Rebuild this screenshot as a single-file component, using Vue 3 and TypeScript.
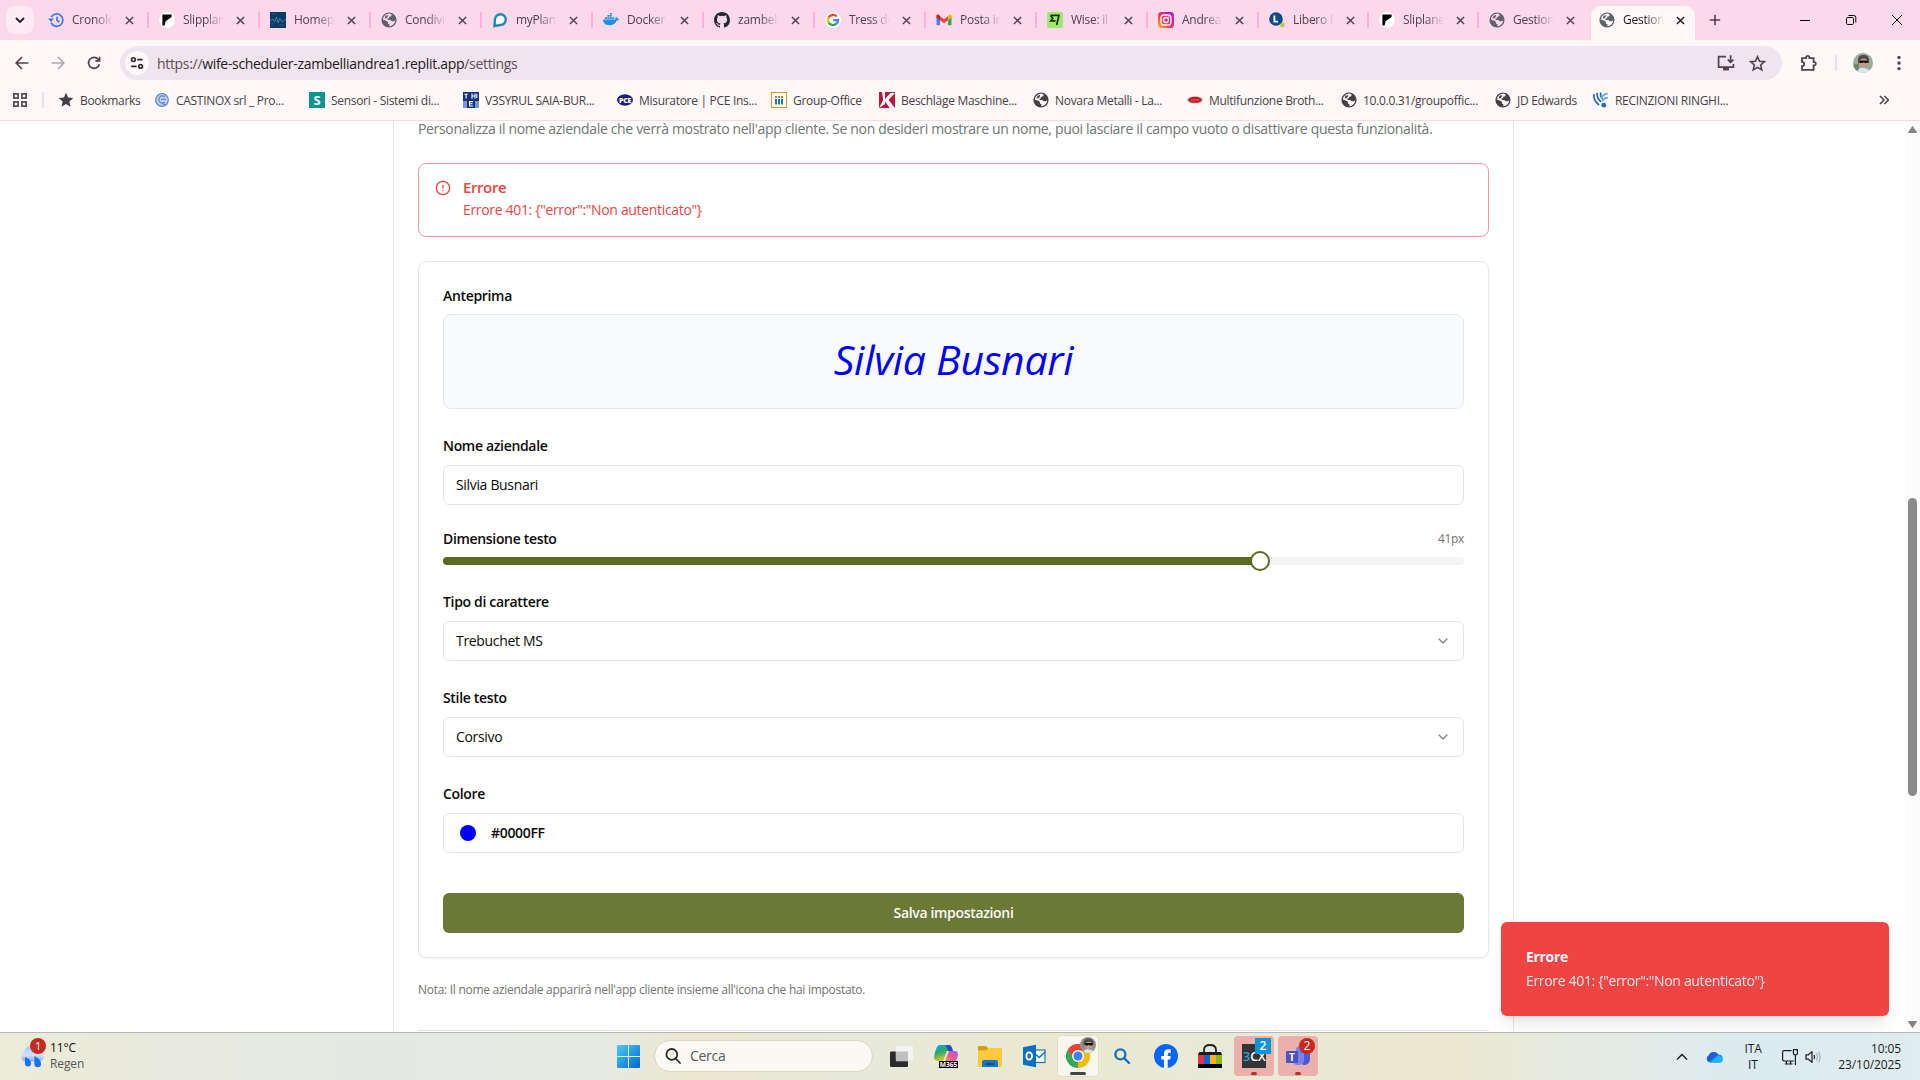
<script setup lang="ts">
import { ref } from 'vue'

interface Tab { icon: string; title: string; width: number; active?: boolean }
interface Bookmark { icon: string; label: string; width: number }

const globe = `<circle cx="8" cy="8" r="7.6" fill="currentColor"/><path fill="var(--hole)" d="M5.2 2.2 8.6 1.6 10.6 2.6 10.2 4.3 8.3 4.8 7.9 6.2 6.3 6.6 6.9 7.9 9.3 8 10.8 9.2 12.9 9.2 14.2 8.3 13.8 10.4 12.3 12.6 10 14 8.4 14.3 8.5 12.4 7 11.4 6.8 9.7 4.7 8.6 1.8 7.6 2.5 4.9Z"/><path fill="currentColor" d="M4.6 3.8 7.1 3.1 6.9 4.6 5.4 6.2 3.5 6.6Z"/>`
const slip = `<ellipse cx="8" cy="8" rx="7.8" ry="8" fill="#fff"/><path fill="#000" d="M3.4 2.6H12.6V5L6.6 9.2 5.6 13.4H3.4Z"/>`

const icons: Record<string, string> = {
  globe,
  slip,
  history: `<g fill="none" stroke="#3b78e7" stroke-width="1.7"><path d="M3.2 5.2A6.2 6.2 0 1 1 3 10.6"/><path d="M9 4.8V8.4L11.4 10"/></g><path fill="#3b78e7" d="M0 6.6H6L3 10Z"/>`,
  home: `<rect width="16" height="16" fill="#0b3a63"/><path d="M0 9 3 7 4.5 10 6.5 5 8 11 10 6 12 10 16 7" fill="none" stroke="#3d83b5" stroke-width=".9"/><path d="M2 2H6M9 13H14M1 12H4" stroke="#1e5f91"/>`,
  myplan: `<path fill="#fff" stroke="#1a8bab" stroke-width="2.4" d="M2.4 14 3 7.6A5.4 5.4 0 1 1 8.4 13Z"/>`,
  docker: `<path fill="#1d91e0" d="M0 7.6H12.2C12.3 6.4 12.6 5.4 13.3 4.8 14 5.4 14.2 6 14.2 6.7 15 6.5 15.6 6.7 16 7 15.6 8.1 14.8 8.5 13.7 8.5 12.5 11.6 10 13.3 6.5 13.3 2.6 13.3.2 11.4 0 7.6Z"/><path fill="#1d91e0" d="M2 5.2H4V7H2ZM4.4 5.2H6.4V7H4.4ZM6.8 5.2H8.8V7H6.8ZM9.2 5.2H11.2V7H9.2ZM4.4 3H6.4V4.8H4.4ZM6.8 3H8.8V4.8H6.8ZM6.8.9H8.8V2.6H6.8Z"/>`,
  github: `<path fill="#24292f" d="M8 0C3.58 0 0 3.58 0 8c0 3.54 2.29 6.53 5.47 7.59.4.07.55-.17.55-.38 0-.19-.01-.82-.01-1.49-2.01.37-2.53-.49-2.69-.94-.09-.23-.48-.94-.82-1.13-.28-.15-.68-.52-.01-.53.63-.01 1.08.58 1.23.82.72 1.21 1.87.87 2.33.66.07-.52.28-.87.51-1.07-1.78-.2-3.64-.89-3.64-3.95 0-.87.31-1.59.82-2.15-.08-.2-.36-1.02.08-2.12 0 0 .67-.21 2.2.82a7.6 7.6 0 0 1 4 0c1.53-1.04 2.2-.82 2.2-.82.44 1.1.16 1.92.08 2.12.51.56.82 1.27.82 2.15 0 3.07-1.87 3.75-3.65 3.95.29.25.54.73.54 1.48 0 1.07-.01 1.93-.01 2.2 0 .21.15.46.55.38A8 8 0 0 0 16 8c0-4.42-3.58-8-8-8Z"/>`,
  google: `<circle cx="8" cy="8" r="8" fill="#fff"/><g fill="none" stroke-width="2.3"><path stroke="#ea4335" d="M3.7 5.4A5 5 0 0 1 11.6 4.5"/><path stroke="#fbbc05" d="M3.8 10.7A5 5 0 0 1 3.8 5.3"/><path stroke="#34a853" d="M11.4 11.7A5 5 0 0 1 3.7 10.6"/><path stroke="#4285f4" d="M8.2 8.2H13A5 5 0 0 1 11.3 11.8"/></g>`,
  gmail: `<path fill="#4285f4" d="M.5 4V13.2H4V7.2Z"/><path fill="#34a853" d="M12 7.2V13.2H15.5V4Z"/><path fill="#ea4335" d="M4 4.2 8 7.3 12 4.2V8.3L8 11.3 4 8.3Z"/><path fill="#c5221f" d="M.5 4C.5 2.6 2.1 2.2 3 2.9L4 3.7V8.3L.5 5.6Z"/><path fill="#fbbc04" d="M15.5 4C15.5 2.6 13.9 2.2 13 2.9L12 3.7V8.3L15.5 5.6Z"/>`,
  wise: `<rect width="16" height="16" rx="1.5" fill="#9fe870"/><path fill="none" stroke="#163300" stroke-width="1.7" d="M3.4 3.4H12L9.6 13M3.6 3.6 5.8 6.2 3.8 8.8H8.6"/>`,
  insta: `<defs><linearGradient id="ig" x1="0" y1="1" x2="1" y2="0"><stop offset="0" stop-color="#fdc32f"/><stop offset=".4" stop-color="#fb3a4c"/><stop offset=".7" stop-color="#e0199b"/><stop offset="1" stop-color="#7a2cf5"/></linearGradient></defs><rect width="16" height="16" rx="3.6" fill="url(#ig)"/><g fill="none" stroke="#fff" stroke-width="1.3"><rect x="3" y="3" width="10" height="10" rx="3"/><circle cx="8" cy="8" r="2.5"/></g><circle cx="11" cy="5" r=".7" fill="#fff"/>`,
  libero: `<circle cx="7" cy="7" r="6.8" fill="#0b4a8f"/><path d="M5.4 3.4V9.6H9" stroke="#fff" stroke-width="1.9" fill="none"/><circle cx="13.4" cy="13" r="2.3" fill="#b5cc2e"/>`,
  star: `<path fill="#464046" d="m8 .8 2.1 4.8 5.2.5-3.9 3.5 1.1 5.1L8 12l-4.5 2.7 1.1-5.1L.7 6.1l5.2-.5Z"/>`,
  castinox: `<rect width="16" height="16" fill="#fff"/><circle cx="8" cy="8" r="6.6" fill="#c3d3f2"/><g fill="none" stroke="#6585cc" stroke-width="1.2"><circle cx="8" cy="8" r="6.3"/><path d="M11 5A3.6 3.6 0 1 0 11 10M7 7.4H12M8 10A3 3 0 0 0 13 12"/></g>`,
  sensori: `<rect width="16" height="16" fill="#0a9690"/><text x="8" y="13" text-anchor="middle" font-family="Open Sans, sans-serif" font-size="13" font-weight="700" fill="#fff">S</text>`,
  v3: `<rect width="16" height="16" fill="#12347e"/><rect x="0" y="9" width="4" height="7" fill="#7d98c9"/><rect x="12" y="9" width="4" height="7" fill="#7d98c9"/><path d="M1.3 2.2H5M3.1 2.2V6.5M9 1.4V6.7M9 4H12M12 1.4V6.7M13.8 2V6M10 9.6H6.6V14H10M6.6 11.8H9.6" stroke="#fff" stroke-width="1.1" fill="none"/>`,
  pce: `<ellipse cx="8" cy="8" rx="8" ry="5.7" fill="#1d1d82"/><text x="8" y="10.6" text-anchor="middle" font-family="Open Sans, sans-serif" font-size="7" font-weight="800" fill="#fff">PCE</text>`,
  group: `<rect x=".5" y=".5" width="15" height="15" fill="#fff" stroke="#e09216"/><path d="M5 4V6M8 4V6M11 4V6" stroke="#6d9a32" stroke-width="2"/><path d="M5 7V12.5M8 7V12.5M11 7V12.5" stroke="#2477a5" stroke-width="2"/>`,
  besch: `<rect width="16" height="16" fill="#b9183b"/><path fill="#fff" d="M3 0H6V7L11.5 1H16L9.5 8 16 16H10.8L6 9.6V12L0 16 4.3 8Z"/>`,
  brother: `<ellipse cx="8" cy="8" rx="8" ry="3.8" fill="#c9c0bd"/><ellipse cx="8" cy="7.8" rx="6.8" ry="3" fill="#c41a27"/><path d="M4 8H12" stroke="#e06167"/>`,
  recin: `<g fill="none" stroke="#1d6cb5" stroke-width="1.7"><path d="M1 2Q0 8 6 13M4.2.8Q3.4 6 8 9.6M8 .6Q6.5 4 9.6 7"/><path stroke="#63a7d9" d="M8 6Q11 1.6 14.6 1.6M9 9Q11.5 5.4 15 6"/></g><circle cx="10.8" cy="13.2" r="2.4" fill="#1d6cb5"/>`,
}

const tabs: Tab[] = [
  { icon: 'history', title: 'Cronologia', width: 111 },
  { icon: 'slip', title: 'Slipplane', width: 111 },
  { icon: 'home', title: 'Homepage', width: 111 },
  { icon: 'globe', title: 'Condividi', width: 111 },
  { icon: 'myplan', title: 'myPlanner', width: 111 },
  { icon: 'docker', title: 'Docker', width: 111 },
  { icon: 'github', title: 'zambelli', width: 111 },
  { icon: 'google', title: 'Tress dev', width: 111 },
  { icon: 'gmail', title: 'Posta in a', width: 111 },
  { icon: 'wise', title: 'Wise: il m', width: 111 },
  { icon: 'insta', title: 'Andrea Z', width: 111 },
  { icon: 'libero', title: 'Libero Mail', width: 110 },
  { icon: 'slip', title: 'Sliplane', width: 110 },
  { icon: 'globe', title: 'Gestione', width: 110 },
  { icon: 'globe', title: 'Gestione', width: 110, active: true },
]

const bookmarks: Bookmark[] = [
  { icon: 'star', label: 'Bookmarks', width: 96 },
  { icon: 'castinox', label: 'CASTINOX srl _ Pro...', width: 155 },
  { icon: 'sensori', label: 'Sensori - Sistemi di...', width: 154 },
  { icon: 'v3', label: 'V3SYRUL SAIA-BUR...', width: 154 },
  { icon: 'pce', label: 'Misuratore | PCE Ins...', width: 154 },
  { icon: 'group', label: 'Group-Office', width: 108 },
  { icon: 'besch', label: 'Beschläge Maschine...', width: 154 },
  { icon: 'globe', label: 'Novara Metalli - La...', width: 154 },
  { icon: 'brother', label: 'Multifunzione Broth...', width: 154 },
  { icon: 'globe', label: '10.0.0.31/groupoffic...', width: 154 },
  { icon: 'globe', label: 'JD Edwards', width: 98 },
  { icon: 'recin', label: 'RECINZIONI RINGHI...', width: 150 },
]

const companyName = ref('Silvia Busnari')
const fontSize = ref(41)
const minSize = 1
const maxSize = 51
const color = ref('#0000FF')
</script>

<template>
  <div class="screen">
    <header class="tabstrip">
      <div class="tab-search">
        <svg width="10" height="6" viewBox="0 0 10 6"><path d="M1 1l4 4 4-4" fill="none" stroke="#1f1a1d" stroke-width="1.8" /></svg>
      </div>
      <div class="tabs">
        <div v-for="(tab, i) in tabs" :key="i" class="tab" :class="{ active: tab.active, last: i >= 13 }" :style="{ width: tab.width + 'px' }">
          <svg class="favicon" viewBox="0 0 16 16" v-html="icons[tab.icon]"></svg>
          <span class="tab-title">{{ tab.title }}</span>
          <svg class="tab-close" viewBox="0 0 10 10"><path d="M1 1l8 8M9 1l-8 8" fill="none" stroke="currentColor" stroke-width="1.6" /></svg>
        </div>
      </div>
      <svg class="new-tab" viewBox="0 0 12 12"><path d="M6 .8v10.4M.8 6h10.4" stroke="#54404c" stroke-width="1.6" /></svg>
      <div class="window-buttons">
        <svg viewBox="0 0 12 12"><path d="M1 6.5h10" stroke="#000" /></svg>
        <svg viewBox="0 0 12 12" fill="none" stroke="#000"><rect x="1.5" y="3.5" width="7" height="7" rx="1.2" /><path d="M3.5 1.5h5.3a2 2 0 0 1 2 2v5" /></svg>
        <svg viewBox="0 0 12 12"><path d="M1 1l10 10M11 1L1 11" stroke="#000" /></svg>
      </div>
    </header>

    <div class="toolbar">
      <svg class="nav-icon" viewBox="0 0 16 16"><path d="M8 2L2.2 8 8 14M2.4 8H14.4" fill="none" stroke="#54404c" stroke-width="1.7" /></svg>
      <svg class="nav-icon" viewBox="0 0 16 16"><path d="M8 2l5.8 6L8 14M13.6 8H1.6" fill="none" stroke="#b3a8ae" stroke-width="1.7" /></svg>
      <svg class="nav-icon" viewBox="0 0 16 16"><path d="M13.4 9.2A5.5 5.5 0 1 1 12.2 4.2L13.4 5.6M13.6 1.8V5.9H9.4" fill="none" stroke="#54404c" stroke-width="1.7" /></svg>
      <div class="omnibox">
        <span class="site-chip">
          <svg width="14" height="14" viewBox="0 0 14 14" fill="none" stroke="#2f262c" stroke-width="1.6"><circle cx="3.4" cy="3.6" r="1.9" /><path d="M7.2 3.6H12.6M1.2 10.4H6.6" /><circle cx="10.6" cy="10.4" r="1.9" /></svg>
        </span>
        <span class="url"><i>https://</i>wife-scheduler-zambelliandrea1.replit.app<i>/settings</i></span>
        <svg class="install" viewBox="0 0 18 18" fill="none" stroke="#54404c" stroke-width="1.7"><path d="M9 2.6H1.6V13.2H16.4V10" /><path d="M6 15.2H12" stroke-width="2.4" /><path d="M13.6 1.2V8M10.8 5.6L13.6 8.4 16.4 5.6" /></svg>
        <svg class="fav" viewBox="0 0 16 16"><path d="m8 1.6 1.9 4.3 4.6.4-3.5 3.1 1 4.6L8 11.6l-4 2.4 1-4.6L1.5 6.3l4.6-.4Z" fill="none" stroke="#54404c" stroke-width="1.5" /></svg>
      </div>
      <svg class="puzzle" viewBox="0 0 18 18"><path d="M2 4.2H6.2V3.4a1.6 1.6 0 0 1 3.2 0V4.2H13.6V8.2H14.2a1.6 1.6 0 0 1 0 3.2H13.6V15.8H2V12.2A2.2 2.2 0 0 0 2 7.8Z" fill="none" stroke="#54404c" stroke-width="1.8" /></svg>
      <span class="bar-sep"></span>
      <svg class="avatar" viewBox="0 0 20 20">
        <defs><clipPath id="av"><circle cx="10" cy="10" r="10" /></clipPath></defs>
        <g clip-path="url(#av)"><rect width="20" height="20" fill="#9caa9c" /><path d="M0 12L6 10V20H0Z" fill="#728466" /><path d="M5 7Q5 2 10.5 2T16 7V10H5Z" fill="#4b4949" /><rect x="7" y="5.5" width="7.4" height="9" rx="3.4" fill="#c39a88" /><path d="M6.6 7.4H14.8V10H11.6L10.8 9 10 10H7Z" fill="#151515" /><path d="M4 20Q5 14 11 15T18 20Z" fill="#dbe6f4" /></g>
      </svg>
      <svg class="menu" viewBox="0 0 4 16" fill="#54404c"><circle cx="2" cy="2.4" r="1.7" /><circle cx="2" cy="8" r="1.7" /><circle cx="2" cy="13.6" r="1.7" /></svg>
    </div>

    <nav class="bookmarks">
      <svg class="apps" viewBox="0 0 14 14" fill="none" stroke="#464046" stroke-width="1.6"><rect x=".9" y=".9" width="4.2" height="4.2" /><rect x="8.9" y=".9" width="4.2" height="4.2" /><rect x=".9" y="8.9" width="4.2" height="4.2" /><rect x="8.9" y="8.9" width="4.2" height="4.2" /></svg>
      <span class="bar-sep"></span>
      <a v-for="b in bookmarks" :key="b.label" class="bookmark" :style="{ width: b.width + 'px' }">
        <svg viewBox="0 0 16 16" v-html="icons[b.icon]"></svg><span>{{ b.label }}</span>
      </a>
      <svg class="more" viewBox="0 0 10 10"><path d="M1 1l4 4-4 4M5.4 1l4 4-4 4" fill="none" stroke="#464046" stroke-width="1.5" /></svg>
    </nav>

    <main class="page">
      <section class="panel">
        <p class="intro">Personalizza il nome aziendale che verrà mostrato nell'app cliente. Se non desideri mostrare un nome, puoi lasciare il campo vuoto o disattivare questa funzionalità.</p>
        <div class="alert">
          <svg viewBox="0 0 24 24" fill="none" stroke="#ef4444" stroke-width="2" stroke-linecap="round"><circle cx="12" cy="12" r="10" /><path d="M12 8v4M12 16h.01" /></svg>
          <div>
            <h5>Errore</h5>
            <p>Errore 401: {"error":"Non autenticato"}</p>
          </div>
        </div>

        <form class="card">
          <label>Anteprima</label>
          <div class="preview"><span :style="{ fontSize: fontSize + 'px', color }">{{ companyName }}</span></div>
          <label class="spaced">Nome aziendale</label>
          <div class="field">{{ companyName }}</div>
          <div class="size-row"><label>Dimensione testo</label><span>{{ fontSize }}px</span></div>
          <div class="slider">
            <div class="fill" :style="{ width: ((fontSize - minSize) / (maxSize - minSize)) * 100 + '%' }"><span class="thumb"></span></div>
          </div>
          <label class="spaced">Tipo di carattere</label>
          <div class="field select">Trebuchet MS
            <svg viewBox="0 0 24 24"><path d="m6 9 6 6 6-6" fill="none" stroke="currentColor" stroke-width="2" stroke-linecap="round" stroke-linejoin="round" /></svg>
          </div>
          <label class="spaced">Stile testo</label>
          <div class="field select">Corsivo
            <svg viewBox="0 0 24 24"><path d="m6 9 6 6 6-6" fill="none" stroke="currentColor" stroke-width="2" stroke-linecap="round" stroke-linejoin="round" /></svg>
          </div>
          <label class="spaced">Colore</label>
          <div class="field colour"><i :style="{ background: color }"></i>{{ color }}</div>
          <div class="save">Salva impostazioni</div>
        </form>
        <p class="note">Nota: Il nome aziendale apparirà nell'app cliente insieme all'icona che hai impostato.</p>
        <hr />
      </section>

      <div class="scrollbar">
        <svg viewBox="0 0 9 7"><path d="M4.5 .5 8.6 6.5H.4Z" fill="#858585" stroke="#858585" stroke-linejoin="round" /></svg>
        <span></span>
        <svg viewBox="0 0 9 7"><path d="M4.5 6.5 8.6 .5H.4Z" fill="#858585" stroke="#858585" stroke-linejoin="round" /></svg>
      </div>

      <aside class="toast">
        <strong>Errore</strong>
        <span>Errore 401: {"error":"Non autenticato"}</span>
      </aside>
    </main>

    <footer class="taskbar">
      <div class="weather">
        <svg width="28" height="32" viewBox="0 0 28 32">
          <defs><linearGradient id="cl" x1="0" y1="0" x2="0" y2="1"><stop offset="0" stop-color="#a9c7f5" /><stop offset=".6" stop-color="#d3e2fb" /><stop offset="1" stop-color="#8aa9ea" /></linearGradient></defs>
          <path d="M6 23.5A5 5 0 0 1 5.4 14 7 7 0 0 1 18.6 11.5 6 6 0 0 1 19.6 23.5Z" fill="url(#cl)" />
          <path d="M6 19Q12 21 12 25.4A3 3 0 0 1 6 25.6ZM15.4 18Q22 21 22 26A3.3 3.3 0 0 1 15.4 26Z" fill="#1673f2" />
          <circle cx="19" cy="8" r="8" fill="#c42b1c" />
          <text x="19.2" y="12" text-anchor="middle" fill="#fff" font-size="11">1</text>
        </svg>
        <div><b>11°C</b><span>Regen</span></div>
      </div>

      <div class="dock">
        <svg class="win" viewBox="0 0 23 23"><defs><linearGradient id="wn" x1="0" y1="0" x2="1" y2="1"><stop offset="0" stop-color="#4cc9fa" /><stop offset="1" stop-color="#0068c8" /></linearGradient></defs><path fill="url(#wn)" d="M1 0H11V11H0V1Q0 0 1 0ZM12 0H22Q23 0 23 1V11H12ZM0 12H11V23H1Q0 23 0 22ZM12 12H23V22Q23 23 22 23H12Z" /></svg>
        <div class="search">
          <svg width="16" height="16" viewBox="0 0 16 16" fill="none" stroke="#2c2c2c" stroke-width="1.8"><circle cx="6.8" cy="6.4" r="5.4" /><path d="M10.6 10.4L15 15" stroke-linecap="round" /></svg>
          <span>Cerca</span>
        </div>
        <div class="app view"><svg viewBox="0 0 24 24"><rect x="0" y="7.5" width="18" height="15.5" rx="1" fill="#2b2b2b" /><rect x="6" y="1.5" width="17.5" height="15.5" rx="1" fill="#f4f4f4" stroke="#dcdcdc" stroke-width=".5" /><rect x="6" y="7.5" width="12" height="9.5" fill="#bfbfbf" /></svg></div>
        <div class="app"><svg viewBox="0 0 24 24">
          <defs><linearGradient id="cp" x1="0" y1="0" x2=".4" y2="1"><stop offset="0" stop-color="#0aa3e8" /><stop offset=".5" stop-color="#2ea86b" /><stop offset="1" stop-color="#f2c51c" /></linearGradient><linearGradient id="cq" x1="1" y1="0" x2="0" y2="1"><stop offset="0" stop-color="#a659e8" /><stop offset=".55" stop-color="#e9579f" /><stop offset="1" stop-color="#fa9a4e" /></linearGradient></defs>
          <path d="M6 1H15Q17 1 18 4L19 7H13L9 17H4Q0 17 0 13Q1 7 3 3Q4 1 6 1Z" fill="url(#cp)" /><path d="M11 1H15Q17 1 18 4L19 7H14Q13 2 11 1Z" fill="#184fc9" /><path d="M15 7H21Q24 7 24 11L22 17H11Z" fill="url(#cq)" />
          <rect x="5" y="17" width="19" height="7" fill="#000" /><text x="14.5" y="23" font-size="6.6" text-anchor="middle" font-weight="700" fill="#fff">M365</text></svg></div>
        <div class="app"><svg viewBox="0 0 24 24"><path d="M0 3Q0 2 1 2H8L10.5 4.5H24V20H0Z" fill="#d89c12" /><path d="M0 6.5H8L10.4 4H23Q24 4 24 5V21.5Q24 23 22.6 23H1.4Q0 23 0 21.5Z" fill="#ffcb3d" /><path d="M4 23V18Q4 16 6 16H18Q20 16 20 18V23Z" fill="#1275c9" /><rect x="7.5" y="19" width="9" height="2" rx="1" fill="#0a4f9a" /></svg></div>
        <div class="app"><svg viewBox="0 0 24 24"><rect x="11" y="6" width="12" height="12.5" fill="#fff" stroke="#1273c5" stroke-width="1.2" /><path d="M11 8L17.2 13.5 23 8" fill="none" stroke="#1273c5" stroke-width="1.5" /><path d="M1 3.2L14 .8V23.2L1 20.8Z" fill="#0a70c4" /><ellipse cx="7.2" cy="12" rx="2.8" ry="3.6" fill="none" stroke="#fff" stroke-width="1.9" /></svg></div>
        <div class="app tile"><svg viewBox="0 0 24 24"><path d="M12 12 1.6 6A12 12 0 0 1 22.4 6Z" fill="#ea4335" /><path d="M12 12 22.4 6A12 12 0 0 1 12 24Z" fill="#fbbc05" /><path d="M12 12 12 24A12 12 0 0 1 1.6 6Z" fill="#34a853" /><path d="M12 6.5H22.5A12 12 0 0 0 2 5.4L6.8 13Z" fill="#ea4335" /><path d="M17 14L12 24A12 12 0 0 0 22.8 7H12Z" fill="#fbbc05" /><circle cx="12" cy="12" r="6" fill="#fff" /><circle cx="12" cy="12" r="4.6" fill="#3f82f4" /></svg>
          <svg class="face" viewBox="0 0 20 20"><circle cx="10" cy="10" r="10" fill="#94918c" /><path d="M4 8Q5 1.5 11 2T17 8V10H4Z" fill="#4f4c4b" /><rect x="7" y="6" width="8" height="9" rx="3.6" fill="#c49c88" /><path d="M6.4 7.6H15.4V10.6H11.8L11 9.4 10 10.6H7Z" fill="#111" /><path d="M4.4 18Q6 14.5 11 15.5T16.6 17.6Q11 22 4.4 18Z" fill="#dfe6ee" /></svg><i class="on"></i></div>
        <div class="app"><svg viewBox="0 0 24 24" fill="none" stroke="#1a70bd" stroke-width="2.4"><circle cx="10.4" cy="10.4" r="5" /><path d="M14.2 14.2L19 19" stroke-linecap="round" /></svg></div>
        <div class="app"><svg viewBox="0 0 24 24"><circle cx="12" cy="12" r="12" fill="#0866ff" /><path d="M10 24V15.6H7.2V12H10V9.8Q10 5.2 14.4 5.2 15.6 5.2 16.8 5.5V8.7H15.2Q13.7 8.7 13.7 10.3V12H16.7L16.1 15.6H13.7V24Z" fill="#fff" /></svg></div>
        <div class="app"><svg viewBox="0 0 24 24"><path d="M6 9V6Q6 1 12 1T18 6V9" fill="none" stroke="#222" stroke-width="1.8" /><path d="M1 8H23L24 11H0Z" fill="#1b1b1b" /><path d="M0 11H6V20H0Z" fill="#e5313d" /><path d="M6 11H12V20H6Z" fill="#0a66d6" /><path d="M12 11H18V20H12Z" fill="#f4b416" /><path d="M18 11H24V20H18Z" fill="#86b81b" /><path d="M0 20H24V24H0Z" fill="#000" /></svg></div>
        <div class="app tile alerting"><svg viewBox="0 0 24 24"><rect width="24" height="24" fill="#333436" /><text x="1" y="16.6" font-size="12.5" font-weight="600" fill="#29a5d8">3<tspan fill="#fff">CX</tspan></text></svg><em class="square">2</em><i class="off"></i></div>
        <div class="app tile alerting"><svg viewBox="0 0 24 24"><circle cx="14" cy="6" r="4" fill="#7b83eb" /><path d="M9 8.6H23Q24 8.6 24 10V15A6 6 0 0 1 17 21Z" fill="#5059c9" /><path d="M7 8.6H18V17A6 6 0 0 1 7 18Z" fill="#7b83eb" /><rect x="0" y="7" width="12" height="12" rx="1" fill="#4b53bc" /><text x="6" y="16.6" text-anchor="middle" font-size="10" font-weight="700" fill="#fff">T</text></svg><em>2</em><i class="off"></i></div>
      </div>

      <div class="tray">
        <svg class="chev" viewBox="0 0 12 8"><path d="M1 6.6L6 1.4 11 6.6" fill="none" stroke="#1b1b1b" stroke-width="1.4" /></svg>
        <svg class="cloud" viewBox="0 0 17 12"><path d="M4.2 11.6A3.9 3.9 0 0 1 3 4.2 5.2 5.2 0 0 1 12.3 3.6 4 4 0 0 1 13.2 11.6Z" fill="#0f8df0" /><path d="M3 4.2A5.2 5.2 0 0 1 12.3 3.6L3 10.8Q-1.4 8 3 4.2Z" fill="#1b5fd9" /><path d="M4.2 11.6L12 5Q16.6 5 16.6 8.6T13.2 11.6Z" fill="#1fb4fb" /></svg>
        <div class="lang"><span>ITA</span><span>IT</span></div>
        <svg class="net" viewBox="0 0 18 18" fill="none" stroke="#1b1b1b" stroke-width="1.2"><path d="M10.5 2.6H3Q1.6 2.6 1.6 4V11.6Q1.6 13 3 13H13M5.4 13V15.8M9.6 13V15.8M3.8 16H11.6" /><path d="M12.4 1.6H16.4V5.4Q16.4 6.8 14.4 6.8T12.4 5.4ZM14.4 6.8V17" /></svg>
        <svg class="vol" viewBox="0 0 17 14" fill="none" stroke="#1b1b1b" stroke-width="1.2"><path d="M1 4.8H3.4L7 1.6V12.4L3.4 9.2H1Z" stroke-linejoin="round" /><path d="M9 5Q10.2 7 9 9" /><path d="M11.4 3.4Q13.4 7 11.4 10.6M13.6 1.8Q16.6 7 13.6 12.2" stroke="#a6b1b5" /></svg>
        <div class="clock"><span>10:05</span><span>23/10/2025</span></div>
      </div>
    </footer>
  </div>
</template>

<style>
body { margin: 0; overflow: hidden; }
</style>

<style scoped>
* { box-sizing: border-box; }
.screen { width: 1920px; height: 1080px; display: flex; flex-direction: column; overflow: hidden; background: #fff; font-family: "Open Sans", "Noto Sans", sans-serif; color: #0c0a09; }
svg { display: block; flex: none; }
p, h5, hr { margin: 0; }

.tabstrip { height: 40px; flex: none; background: #fbd9ea; display: flex; align-items: flex-start; }
.tab-search { width: 28px; height: 28px; margin: 6px 3px 0 6px; border-radius: 9px; background: #fdebf4; display: flex; align-items: center; justify-content: center; }
.tabs { display: flex; height: 34px; margin-top: 6px; }
.tab { position: relative; display: flex; align-items: center; padding: 0 0 6px 11px; color: #54404c; --hole: #fbd9ea; }
.tab::after { content: ""; position: absolute; right: -1px; top: 6px; width: 2px; height: 16px; background: #fcaede; }
.tab.last::after { display: none; }
.favicon { width: 16px; height: 16px; color: #5f6368; }
.tab-title { width: 41px; margin-left: 8px; overflow: hidden; white-space: nowrap; font-size: 12px; line-height: 16px; letter-spacing: -0.25px; -webkit-mask-image: linear-gradient(90deg, #000 55%, transparent); mask-image: linear-gradient(90deg, #000 55%, transparent); }
.tab-close { width: 9px; height: 9px; margin-left: 12px; }
.tab.active { --hole: #fff8f8; color: #1f1a1d; }
.tab.active::before { content: ""; position: absolute; left: 3px; top: 0; width: 104px; height: 34px; border-radius: 10px 10px 0 0; background: #fff8f8; }
.tab.active > * { position: relative; }
.new-tab { width: 12px; height: 12px; margin: 14px 0 0 11px; }
.window-buttons { margin-left: auto; margin-right: 17px; display: flex; gap: 34px; padding-top: 14px; }
.window-buttons svg { width: 12px; height: 12px; }

.toolbar { height: 46px; flex: none; background: #fff8f8; display: flex; align-items: center; padding-left: 14px; }
.nav-icon { width: 16px; height: 16px; margin-right: 20px; }
.omnibox { width: 1662px; height: 34px; margin-left: -2px; border-radius: 17px; background: #f0e4ee; display: flex; align-items: center; padding-left: 5px; }
.site-chip { width: 24px; height: 24px; border-radius: 12px; background: #fff8f8; display: flex; align-items: center; justify-content: center; }
.url { margin-left: 8px; font-size: 14px; letter-spacing: -0.32px; color: #1f1a1d; }
.url i { font-style: normal; color: #5c4d56; }
.install { width: 18px; height: 18px; margin-left: auto; }
.fav { width: 17px; height: 17px; margin: 0 16px 0 14px; }
.puzzle { width: 18px; height: 18px; margin-left: 18px; }
.bar-sep { width: 2px; height: 16px; background: #fbd9ea; flex: none; }
.toolbar .bar-sep { margin-left: 17px; }
.avatar { width: 20px; height: 20px; margin-left: 16px; }
.menu { width: 4px; height: 16px; margin-left: 24px; }

.bookmarks { height: 35px; flex: none; background: #fff8f8; border-bottom: 1px solid #efdce4; display: flex; align-items: center; padding: 0 0 6px 13px; color: #464046; --hole: #fff8f8; }
.apps { width: 14px; height: 14px; }
.bookmarks .bar-sep { margin: 0 14px 0 15px; }
.bookmark { display: flex; align-items: center; gap: 6px; white-space: nowrap; font-size: 12px; letter-spacing: -0.3px; }
.bookmark svg { width: 16px; height: 16px; }
.more { width: 10px; height: 10px; margin-left: auto; margin-right: 31px; }

.page { position: relative; flex: 1; min-height: 0; overflow: hidden; display: flex; justify-content: space-between; }
.panel { width: 1121px; height: 960px; margin-left: 393px; border: 1px solid #e5e5e5; border-width: 0 1px; padding: 0 24px; font-size: 14px; line-height: 20px; letter-spacing: -0.33px; }
.intro { margin-top: -2px; color: #737373; white-space: nowrap; }
.alert { height: 74px; margin-top: 24px; border: 1px solid #f59a9a; border-radius: 8px; padding: 13px 16px; display: flex; gap: 12px; color: #ef4444; }
.alert svg { width: 16px; height: 16px; margin-top: 3px; }
.alert h5 { font-size: 15px; font-weight: 600; line-height: 20px; letter-spacing: -0.4px; margin-bottom: 3px; }
.card { display: block; height: 697px; margin-top: 24px; border: 1px solid #e5e5e5; border-radius: 8px; padding: 24px; box-shadow: 0 1px 2px rgba(0, 0, 0, .05); }
label { display: block; font-weight: 600; height: 20px; }
label.spaced { margin-top: 27px; }
.preview { height: 95px; margin-top: 8px; background: #f8fafc; border: 1px solid #e2e8f0; border-radius: 8px; display: flex; align-items: center; justify-content: center; padding-bottom: 4px; }
.preview span { font-style: italic; line-height: 1.2; letter-spacing: -0.3px; }
.field { height: 40px; margin-top: 9px; border: 1px solid #e5e5e5; border-radius: 6px; padding: 0 12px; display: flex; align-items: center; }
.select { justify-content: space-between; }
.select svg { width: 16px; height: 16px; color: #858585; }
.size-row { margin-top: 24px; display: flex; justify-content: space-between; }
.size-row span { font-size: 12px; color: #737373; }
.slider { height: 8px; margin-top: 8px; border-radius: 4px; background: #f4f4f4; }
.fill { position: relative; height: 8px; border-radius: 4px 0 0 4px; background: #5a6b20; }
.thumb { position: absolute; right: -10px; top: -6px; width: 20px; height: 20px; border-radius: 50%; border: 2px solid #5a6b20; background: #fff; }
.colour { padding-left: 16px; font-weight: 600; }
.colour i { width: 16px; height: 16px; border-radius: 50%; margin-right: 15px; }
.save { height: 40px; margin-top: 40px; border-radius: 6px; background: #6b7836; color: #fafaf9; font-weight: 600; display: flex; align-items: center; justify-content: center; }
.note { margin-top: 24px; font-size: 12px; line-height: 16px; letter-spacing: -0.28px; color: #737373; }
hr { margin-top: 32px; border: 0; height: 1px; background: #e2e2e6; }

.scrollbar { width: 15px; background: #fcfcfc; display: flex; flex-direction: column; align-items: center; padding: 5px 0 4px; }
.scrollbar svg { width: 9px; height: 7px; }
.scrollbar span { width: 9px; height: 298px; margin: 365px 0 auto; border-radius: 5px; background: #8a8a8a; }

.toast { position: absolute; right: 31px; bottom: 16px; width: 388px; height: 94px; border-radius: 6px; background: #ef4444; color: #fafafa; box-shadow: 0 10px 15px -3px rgba(0, 0, 0, .1), 0 4px 6px -4px rgba(0, 0, 0, .1); padding: 25px; display: flex; flex-direction: column; gap: 4px; font-size: 14px; line-height: 20px; letter-spacing: -0.33px; }
.toast span { opacity: .9; }

.taskbar { position: relative; height: 48px; flex: none; border-top: 1px solid #b5b8b4; background: linear-gradient(90deg, #ecebd8 0, #e4e9e4 370px, #e6eae2 600px, #ece7d0 690px, #e7e9db 850px, #ebe8cf 1060px, #e8ead8 1200px, #ece8d0 1440px, #e3ebe6 1620px, #dbebf1 1770px, #e0ecef 1920px); display: flex; font-size: 12px; }
.weather { display: flex; width: 617px; padding: 5px 0 0 19px; gap: 3px; }
.weather div { display: flex; flex-direction: column; line-height: 16px; padding-top: 2px; letter-spacing: -0.1px; }
.weather b { font-weight: 400; }
.weather span { color: #555; }
.dock { display: flex; align-items: center; padding-bottom: 1px; }
.win { width: 23px; height: 23px; }
.search { width: 219px; height: 32px; margin: 0 9px 0 14px; border-radius: 16px; background: #faf9f4; border: 1px solid #d9d7c4; display: flex; align-items: center; padding-left: 10px; gap: 9px; font-size: 14px; color: #5c5c5c; }
.search span { letter-spacing: -0.3px; padding-bottom: 1px; }
.app { position: relative; width: 40px; height: 40px; margin-right: 4px; border-radius: 4px; display: flex; align-items: center; justify-content: center; }
.app > svg { width: 24px; height: 24px; }
.app:nth-child(n) { margin-left: 0; }
.tile { background: rgba(255, 255, 255, .65); box-shadow: 0 0 0 .5px rgba(0, 0, 0, .08); }
.tile.alerting { background: #eab0ac; box-shadow: none; }
.app i { position: absolute; bottom: 1px; left: 12px; width: 16px; height: 3px; border-radius: 2px; background: #444; }
.app i.off { left: 17px; width: 6px; background: #c42b1c; }
.app .face { position: absolute; right: 2px; top: 1px; width: 16px; height: 16px; }
.app em { position: absolute; right: 3px; top: 2px; width: 16px; height: 16px; border-radius: 50%; background: #c42b1c; color: #fff; font-style: normal; font-size: 12px; line-height: 16px; text-align: center; }
.app em.square { border-radius: 0; background: #0a96d4; font-weight: 600; }
.tray { position: absolute; right: 19px; top: 0; height: 47px; display: flex; align-items: center; color: #1b1b1b; }
.chev { width: 12px; height: 8px; }
.cloud { width: 17px; height: 12px; margin-left: 18px; }
.lang, .clock { display: flex; flex-direction: column; line-height: 16px; letter-spacing: -0.1px; }
.lang { align-items: center; width: 24px; margin-left: 18px; }
.net { width: 18px; height: 18px; margin-left: 16px; }
.vol { width: 17px; height: 14px; margin-left: 6px; }
.clock { width: 68px; margin-left: 11px; text-align: right; white-space: nowrap; }
</style>
